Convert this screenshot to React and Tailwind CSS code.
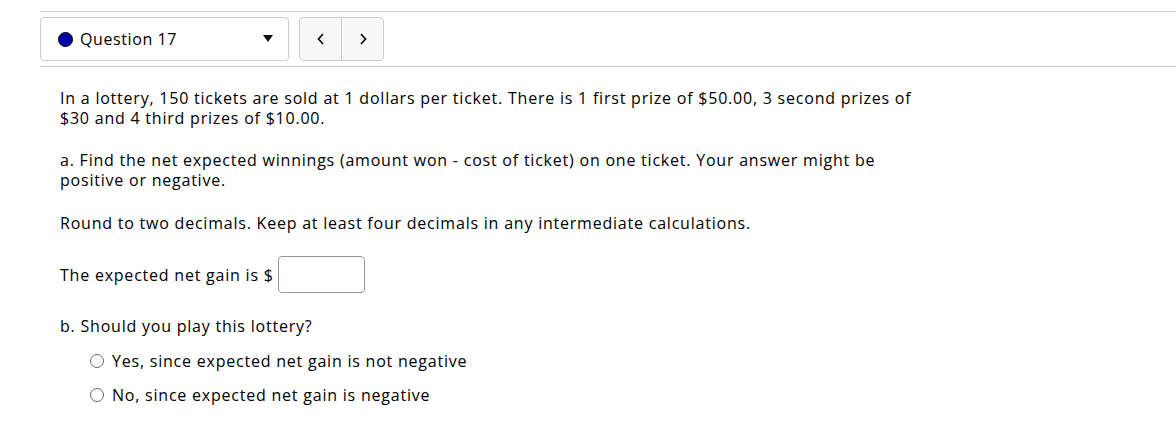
export default function App() {
  const font = { fontFamily: '"Open Sans", "Noto Sans", sans-serif' };
  return (
    <div className="w-[1176px] h-[427px] bg-white text-[16px] text-black" style={font}>
      <div className="pl-[40px] pt-[11px]">
        <div className="border-t border-b border-[#cccccc] h-[56px] flex items-start pt-[5px]">
          <div className="w-[249px] h-[44px] border border-[#cccccc] rounded-[4px] flex items-center pl-[17px] pr-[15px]">
            <span className="w-[15px] h-[15px] rounded-full bg-[#0000a8] border border-black"></span>
            <span className="ml-[7px] flex-1 tracking-[0.6px]">Question 17</span>
            <svg width="10" height="8" viewBox="0 0 10 8"><path d="M0 0 L10 0 L5 7 Z" fill="#111" /></svg>
          </div>
          <div className="ml-[10px] h-[44px] w-[85px] border border-[#cccccc] rounded-[4px] bg-[#f7f7f7] flex">
            <div className="w-[42px] flex items-center justify-center border-r border-[#cccccc]">
              <svg width="8" height="12" viewBox="0 0 8 12"><path d="M6 1 L1.5 6 L6 11" fill="none" stroke="#111" strokeWidth="1.8" /></svg>
            </div>
            <div className="flex-1 flex items-center justify-center">
              <svg width="8" height="12" viewBox="0 0 8 12"><path d="M2 1 L6.5 6 L2 11" fill="none" stroke="#111" strokeWidth="1.8" /></svg>
            </div>
          </div>
        </div>
      </div>
      <div className="pl-[60px] pt-[21px] leading-[20px] tracking-[0.78px]">
        <p>In a lottery, 150 tickets are sold at 1 dollars per ticket. There is 1 first prize of $50.00, 3 second prizes of<br />$30 and 4 third prizes of $10.00.</p>
        <p className="mt-[22px]">a. Find the net expected winnings (amount won - cost of ticket) on one ticket. Your answer might be<br />positive or negative.</p>
        <p className="mt-[23px]">Round to two decimals. Keep at least four decimals in any intermediate calculations.</p>
        <div className="mt-[23px] flex items-center">
          <span>The expected net gain is $</span>
          <span className="ml-[4px] w-[87px] h-[37px] border border-[#999999] rounded-[4px]"></span>
        </div>
        <p className="mt-[23px]">b. Should you play this lottery?</p>
        <div className="pl-[30px] mt-[15px] flex items-center">
          <span className="w-[14px] h-[14px] rounded-full border border-[#666]"></span>
          <span className="ml-[8px]">Yes, since expected net gain is not negative</span>
        </div>
        <div className="pl-[30px] mt-[14px] flex items-center">
          <span className="w-[14px] h-[14px] rounded-full border border-[#666]"></span>
          <span className="ml-[8px]">No, since expected net gain is negative</span>
        </div>
      </div>
    </div>
  );
}
